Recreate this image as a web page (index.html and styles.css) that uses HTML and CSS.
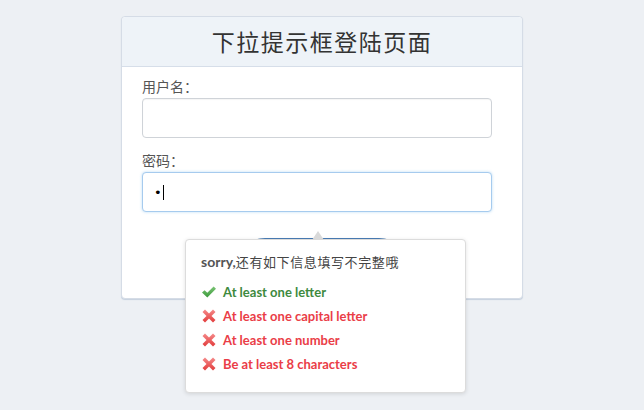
FILE: index.html
```html
<!DOCTYPE html>
<html lang="zh-CN">
<head>
<meta charset="utf-8">
<title>下拉提示框登陆页面</title>
<link rel="stylesheet" href="styles.css">
</head>
<body>
<div class="card">
  <div class="card-head">下拉提示框登陆页面</div>
  <div class="card-body">
    <div class="label">用户名：</div>
    <div class="input"></div>
    <div class="label">密码：</div>
    <div class="pw-wrap">
      <div class="input focus"><span class="dot">•</span><span class="caret"></span></div>
      <div class="tip">
        <div class="tip-title"><b>sorry,</b>还有如下信息填写不完整哦</div>
        <ul class="rules">
          <li class="ok"><svg class="ico" viewBox="0 0 16 16"><defs><linearGradient id="g" x1="0" y1="0" x2="0" y2="1"><stop offset="0" stop-color="#7cc576"/><stop offset="1" stop-color="#3c9a3c"/></linearGradient></defs><path d="M1 8.6 L3.6 6.2 L6.3 8.8 L12.6 2.4 L15 4.8 L6.3 13.4 Z" fill="url(#g)"/></svg>At least one letter</li>
          <li class="bad"><svg class="ico" viewBox="0 0 16 16"><defs><linearGradient id="r" x1="0" y1="0" x2="0" y2="1"><stop offset="0" stop-color="#f58a8a"/><stop offset="1" stop-color="#e23b3b"/></linearGradient></defs><path d="M1.5 4 L4 1.5 L8 5.5 L12 1.5 L14.5 4 L10.5 8 L14.5 12 L12 14.5 L8 10.5 L4 14.5 L1.5 12 L5.5 8 Z" fill="url(#r)"/></svg>At least one capital letter</li>
          <li class="bad"><svg class="ico" viewBox="0 0 16 16"><path d="M1.5 4 L4 1.5 L8 5.5 L12 1.5 L14.5 4 L10.5 8 L14.5 12 L12 14.5 L8 10.5 L4 14.5 L1.5 12 L5.5 8 Z" fill="url(#r)"/></svg>At least one number</li>
          <li class="bad"><svg class="ico" viewBox="0 0 16 16"><path d="M1.5 4 L4 1.5 L8 5.5 L12 1.5 L14.5 4 L10.5 8 L14.5 12 L12 14.5 L8 10.5 L4 14.5 L1.5 12 L5.5 8 Z" fill="url(#r)"/></svg>Be at least 8 characters</li>
        </ul>
      </div>
    </div>
    <div class="btn-row"><div class="btn"></div></div>
  </div>
</div>
</body>
</html>
```

FILE: styles.css
```css
html, body {
  margin: 0;
  padding: 0;
}
body {
  background: #edf0f4;
  font-family: "Noto Sans CJK SC", "Noto Sans", sans-serif;
  padding-top: 16px;
  height: 394px;
  overflow: hidden;
}
.card {
  width: 400px;
  margin: 0 auto;
  background: #fff;
  border: 1px solid #d5dce6;
  border-radius: 4px;
  box-shadow: 0 1px 1px #c5d0de;
}
.card-head {
  height: 49px;
  line-height: 49px;
  background: #eef3f8;
  border-bottom: 1px solid #d6dee9;
  border-radius: 4px 4px 0 0;
  text-align: center;
  font-size: 23px;
  letter-spacing: 1.5px;
  color: #333;
}
.card-body {
  padding: 8px 30px 27px 20px;
}
.label {
  font-size: 14px;
  line-height: 22px;
  color: #555;
  margin-bottom: 1px;
}
.input {
  box-sizing: border-box;
  height: 40px;
  width: 350px;
  border: 1px solid #cfd3d8;
  border-radius: 4px;
  background: #fff;
  margin-bottom: 11px;
  box-shadow: inset 0 1px 1px rgba(0,0,0,0.04);
}
.input.focus {
  border-color: #a6cbee;
  box-shadow: 0 0 3px rgba(102,175,233,0.45);
  display: flex;
  align-items: center;
  padding-left: 11px;
  margin-bottom: 0;
}
.dot {
  font-family: "DejaVu Sans", sans-serif;
  font-size: 13px;
  color: #000;
  line-height: 1;
}
.caret {
  display: inline-block;
  width: 1px;
  height: 15px;
  background: #000;
  margin-left: 1px;
}
.pw-wrap {
  position: relative;
}
.btn-row {
  display: flex;
  justify-content: center;
  padding-top: 26px;
  padding-left: 10px;
}
.btn {
  width: 130px;
  height: 33px;
  background: linear-gradient(to right, #c9d6e4 0, #4a7db5 8px, #4a7db5 122px, #c9d6e4 130px);
  border-radius: 3px;
}
.tip {
  position: absolute;
  left: 43px;
  top: 67px;
  width: 249px;
  padding: 11px 15px 16px 15px;
  background: #fff;
  border: 1px solid #dcdcdc;
  border-radius: 4px;
  box-shadow: 0 1px 4px rgba(0,0,0,0.12);
  z-index: 2;
}
.tip::before {
  content: "";
  position: absolute;
  left: 126px;
  top: -9px;
  border-left: 6px solid transparent;
  border-right: 6px solid transparent;
  border-bottom: 9px solid #d9d9d9;
}
.tip-title {
  font-size: 13px;
  line-height: 22px;
  color: #444;
  letter-spacing: 0.6px;
}
.tip-title b {
  font-family: Lato, "Open Sans", sans-serif;
  font-weight: 700;
  font-size: 14px;
  letter-spacing: 0;
  color: #555;
}
.rules {
  list-style: none;
  margin: 7px 0 0 0;
  padding: 0;
}
.rules li {
  display: flex;
  align-items: center;
  height: 24px;
  font-family: Lato, "Open Sans", sans-serif;
  font-weight: 700;
  font-size: 13px;
}
.ico {
  width: 16px;
  height: 16px;
  margin-right: 6px;
  flex: none;
}
.ok { color: #3e8a3e; }
.bad { color: #ea3d47; }
```
